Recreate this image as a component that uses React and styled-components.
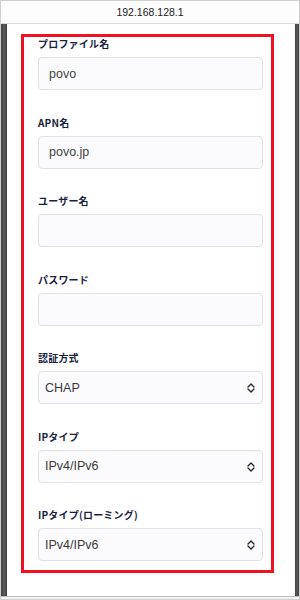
import React from "react"
import styled, { createGlobalStyle } from "styled-components"

const Global = createGlobalStyle`
  html, body { margin: 0; padding: 0; background: #fff; }
  * { box-sizing: border-box; }
`

const Frame = styled.div`
  width: 300px;
  height: 600px;
  border: 1px solid #cfcfcf;
  display: flex;
  flex-direction: column;
  background: #f4f4f4;
  overflow: hidden;
`

const UrlBar = styled.div`
  height: 23px;
  flex-shrink: 0;
  background: #fdfdfd;
  border-bottom: 1px solid #dadada;
  display: flex;
  align-items: center;
  justify-content: center;
  font-family: "Liberation Sans", Arial, sans-serif;
  font-size: 10.5px;
  color: #222;
`

const Viewport = styled.div`
  height: 573px;
  display: flex;
  border-bottom: 1px solid #bdbdbd;
`

const Strip = styled.div`
  width: ${p => p.$w}px;
  background: linear-gradient(to right, #3e3e3e, #5c5c5c, #3e3e3e);
  flex-shrink: 0;
`

const Page = styled.div`
  flex: 1;
  background: #fff;
  padding: 10px 21px 0 14px;
`

const Highlight = styled.form`
  border: 3px solid #ee1122;
  padding: 0 8px 9px 14px;
  display: flex;
  flex-direction: column;
  gap: 25.5px;
`

const Field = styled.div`
  display: flex;
  flex-direction: column;
  gap: 6px;
`

const Label = styled.label`
  font-family: "Noto Sans CJK JP", "Liberation Sans", sans-serif;
  font-weight: 700;
  font-size: 10px;
  line-height: 14px;
  color: #1b1f40;
  letter-spacing: 0.2px;
`

const Input = styled.input`
  height: 33px;
  width: 100%;
  border: 1px solid #dfe0e8;
  border-radius: 4px;
  background: #fbfbfd;
  padding: 0 0 0 10px;
  font-family: "Liberation Sans", Arial, sans-serif;
  font-size: 12.5px;
  color: #444;
  outline: none;
`

const SelectWrap = styled.div`
  position: relative;
`

const Select = styled.select`
  appearance: none;
  -webkit-appearance: none;
  height: 33px;
  width: 100%;
  border: 1px solid #dfe0e8;
  border-radius: 4px;
  background: #fbfbfd;
  padding: 0 0 0 6px;
  font-family: "Liberation Sans", Arial, sans-serif;
  font-size: 12.5px;
  color: #3a3a3a;
  outline: none;
`

const Chevron = styled.svg`
  position: absolute;
  right: 8px;
  top: 12px;
  pointer-events: none;
`

const TextField = ({ label, value }) => (
  <Field>
    <Label>{label}</Label>
    <Input type="text" defaultValue={value} />
  </Field>
)

const SelectField = ({ label, value, options }) => (
  <Field>
    <Label>{label}</Label>
    <SelectWrap>
      <Select defaultValue={value}>
        {options.map(o => <option key={o}>{o}</option>)}
      </Select>
      <Chevron width="8" height="10" viewBox="0 0 8 10">
        <path d="M1 4 L4 1 L7 4 M1 6 L4 9 L7 6" fill="none" stroke="#222" strokeWidth="1.3" strokeLinecap="round" strokeLinejoin="round" />
      </Chevron>
    </SelectWrap>
  </Field>
)

const ipTypes = ["IPv4", "IPv6", "IPv4/IPv6"]

export default function App() {
  return (
    <>
      <Global />
      <Frame>
        <UrlBar>192.168.128.1</UrlBar>
        <Viewport>
          <Strip $w={6} />
          <Page>
            <Highlight>
              <TextField label="プロファイル名" value="povo" />
              <TextField label="APN名" value="povo.jp" />
              <TextField label="ユーザー名" value="" />
              <TextField label="パスワード" value="" />
              <SelectField label="認証方式" value="CHAP" options={["なし", "PAP", "CHAP"]} />
              <SelectField label="IPタイプ" value="IPv4/IPv6" options={ipTypes} />
              <SelectField label="IPタイプ(ローミング)" value="IPv4/IPv6" options={ipTypes} />
            </Highlight>
          </Page>
          <Strip $w={4} />
        </Viewport>
      </Frame>
    </>
  )
}
